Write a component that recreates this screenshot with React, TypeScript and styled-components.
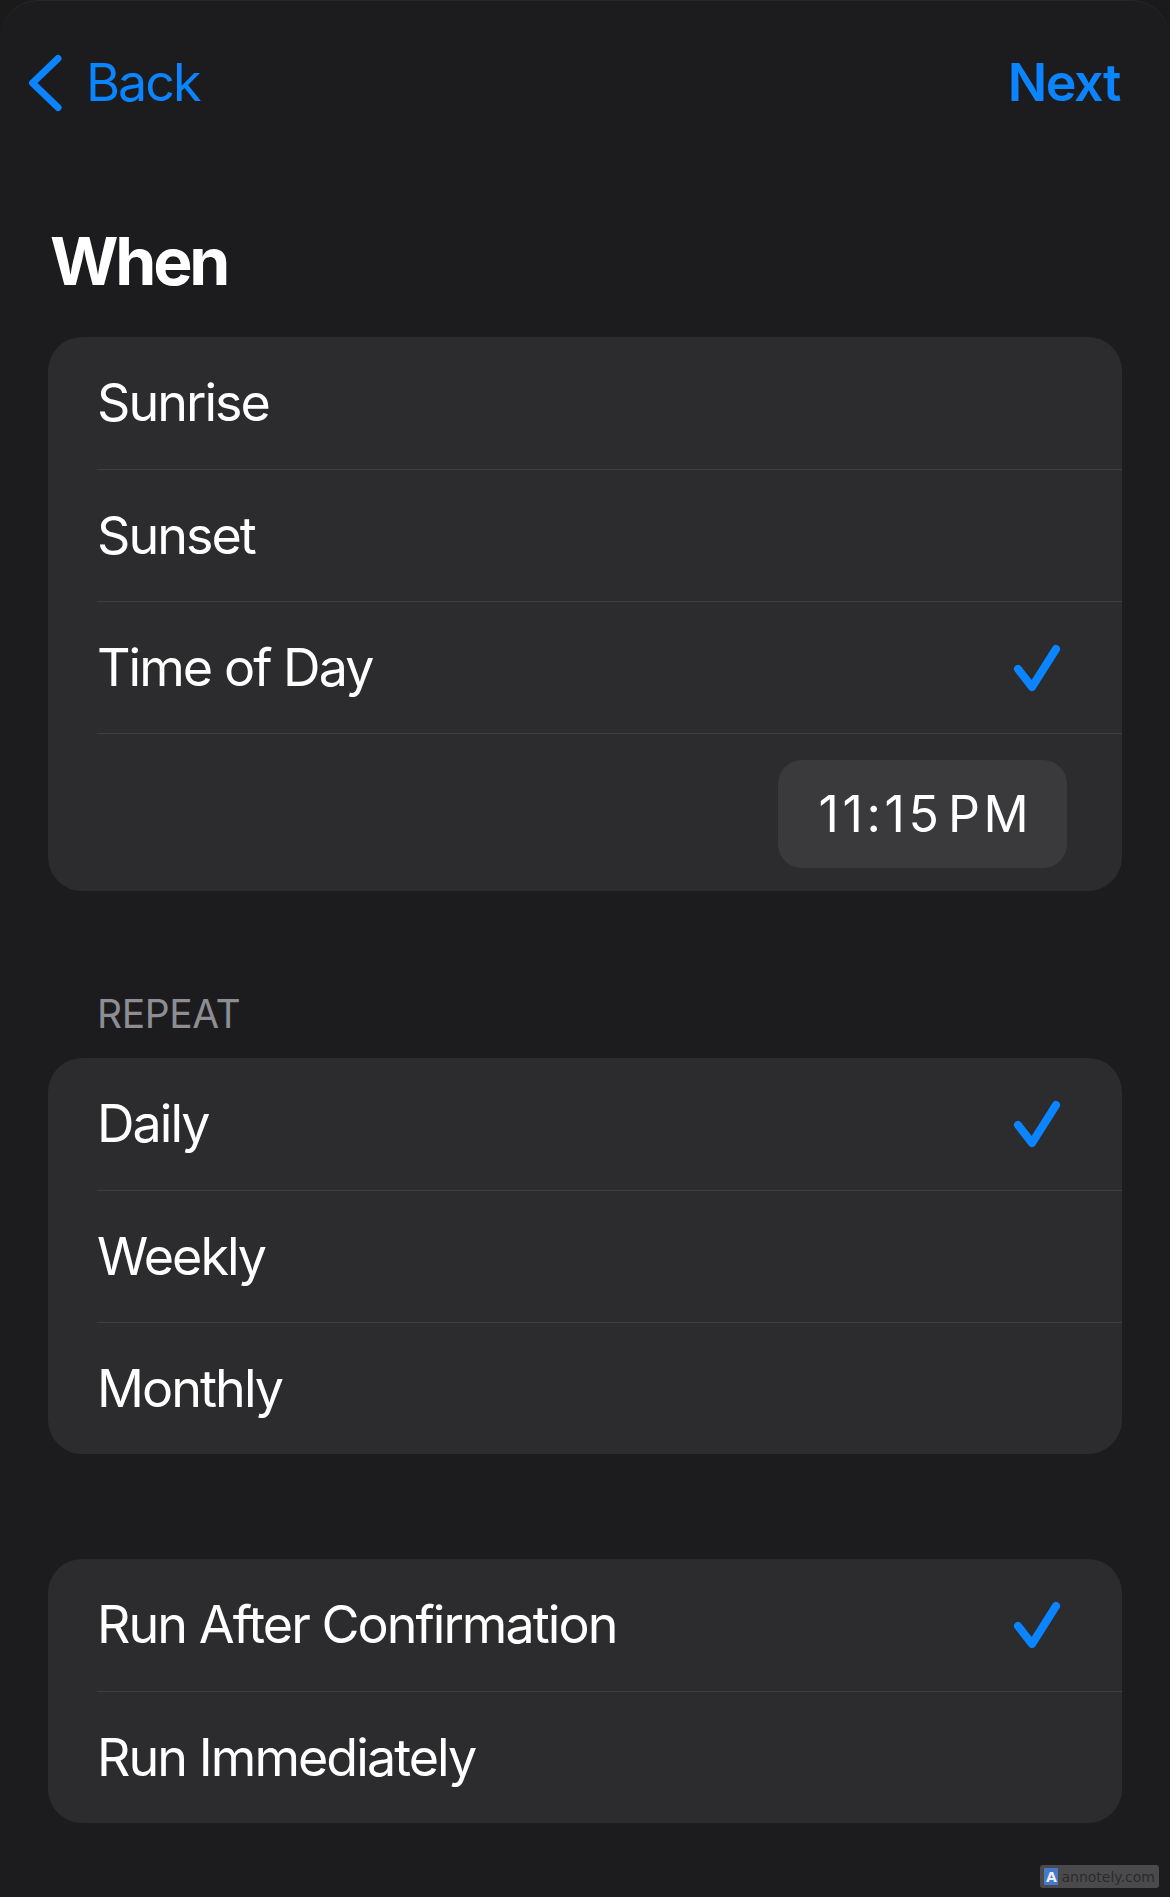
import React from "react";
import styled, { createGlobalStyle } from "styled-components";

const Global = createGlobalStyle`
  html, body {
    margin: 0;
    padding: 0;
    background: #1a1a1b;
  }
  body {
    font-family: Inter, "Noto Sans", "Liberation Sans", sans-serif;
    -webkit-font-smoothing: antialiased;
  }
  * { box-sizing: border-box; }
`;

const Page = styled.div`
  position: relative;
  width: 1170px;
  min-height: 1897px;
  background: #1c1c1e;
  border-radius: 38px 38px 0 0;
  box-shadow: inset 0 1px 0 rgba(255, 255, 255, 0.05);
  padding: 39px 0 76px;
  overflow: hidden;
`;

const NavBar = styled.div`
  display: flex;
  align-items: center;
  justify-content: space-between;
  height: 88px;
  padding: 0 50px 0 27px;
`;

const NavButton = styled.div<{ $bold?: boolean }>`
  display: flex;
  align-items: center;
  gap: 23px;
  color: #0a84ff;
  font-size: 52px;
  font-weight: ${(p) => (p.$bold ? 600 : 400)};
  letter-spacing: ${(p) => (p.$bold ? "-1.4px" : "-2px")};
  line-height: 64px;
`;

const Title = styled.h1`
  margin: 94px 0 36px 50px;
  color: #ffffff;
  font-size: 66px;
  font-weight: 700;
  line-height: 80px;
  letter-spacing: -3.2px;
`;

const Card = styled.div`
  margin: 0 48px;
  background: #2c2c2e;
  border-radius: 34px;
  overflow: hidden;
`;

const Item = styled.div`
  padding-left: 49px;
`;

const ItemInner = styled.div<{ $first?: boolean }>`
  display: flex;
  align-items: center;
  justify-content: space-between;
  height: 132px;
  padding-right: 61px;
  border-top: ${(p) => (p.$first ? "none" : "1px solid #3e3e42")};
`;

const Label = styled.span`
  color: #ffffff;
  font-size: 52px;
  font-weight: 400;
  letter-spacing: -1.95px;
  line-height: 64px;
`;

const PickerRow = styled.div`
  display: flex;
  justify-content: flex-end;
  padding: 26px 55px 23px 0;
  border-top: 1px solid #3e3e42;
`;

const TimePill = styled.div`
  display: flex;
  align-items: center;
  justify-content: center;
  width: 289px;
  height: 108px;
  border-radius: 24px;
  background: #3a3a3c;
  color: #ffffff;
  font-size: 50px;
  font-weight: 400;
  letter-spacing: 3.6px;
  word-spacing: -12px;
  padding-left: 6px;
`;

const SectionHeader = styled.div`
  margin: 99px 0 20px 97px;
  color: #8d8d93;
  font-size: 39px;
  line-height: 48px;
  letter-spacing: -0.4px;
`;

const Spacer = styled.div<{ $h: number }>`
  height: ${(p) => p.$h}px;
`;

const Watermark = styled.div`
  position: absolute;
  right: 11px;
  bottom: 11px;
  display: flex;
  align-items: center;
  gap: 3px;
  height: 23px;
  padding: 0 4px;
  border-radius: 3px;
  background: #4a4a4c;
  color: #2a2a2c;
  font-family: "DejaVu Sans", sans-serif;
  font-size: 14px;
`;

const WmIcon = styled.span`
  display: flex;
  align-items: center;
  justify-content: center;
  width: 14px;
  height: 17px;
  background: #4a78c8;
  color: #e8eefa;
  font-size: 14px;
  font-weight: 700;
`;

const Chevron = () => (
  <svg width="36" height="58" viewBox="0 0 36 58" fill="none">
    <path
      d="M31 4.5 L5.5 29 L31 53.5"
      stroke="#0a84ff"
      strokeWidth="7"
      strokeLinecap="round"
      strokeLinejoin="round"
    />
  </svg>
);

const Check = () => (
  <svg width="48" height="48" viewBox="0 0 48 48" fill="none">
    <path
      d="M5 25 L19 43 L43 5"
      stroke="#0a84ff"
      strokeWidth="8"
      strokeLinecap="round"
      strokeLinejoin="round"
    />
  </svg>
);

type Opt = { label: string; checked?: boolean };

const OptionList = ({ options }: { options: Opt[] }) => (
  <>
    {options.map((o, i) => (
      <Item key={o.label}>
        <ItemInner $first={i === 0}>
          <Label>{o.label}</Label>
          {o.checked && <Check />}
        </ItemInner>
      </Item>
    ))}
  </>
);

export default function App() {
  return (
    <>
      <Global />
      <Page>
        <NavBar>
          <NavButton>
            <Chevron />
            <span>Back</span>
          </NavButton>
          <NavButton $bold>Next</NavButton>
        </NavBar>

        <Title>When</Title>

        <Card>
          <OptionList
            options={[
              { label: "Sunrise" },
              { label: "Sunset" },
              { label: "Time of Day", checked: true },
            ]}
          />
          <Item>
            <PickerRow>
              <TimePill>11:15 PM</TimePill>
            </PickerRow>
          </Item>
        </Card>

        <SectionHeader>REPEAT</SectionHeader>
        <Card>
          <OptionList
            options={[
              { label: "Daily", checked: true },
              { label: "Weekly" },
              { label: "Monthly" },
            ]}
          />
        </Card>

        <Spacer $h={105} />
        <Card>
          <OptionList
            options={[
              { label: "Run After Confirmation", checked: true },
              { label: "Run Immediately" },
            ]}
          />
        </Card>

        <Watermark>
          <WmIcon>A</WmIcon>
          <span>annotely.com</span>
        </Watermark>
      </Page>
    </>
  );
}
